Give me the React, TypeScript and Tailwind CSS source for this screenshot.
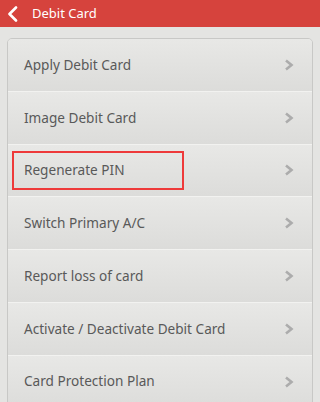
const ITEMS = [
  'Apply Debit Card',
  'Image Debit Card',
  'Regenerate PIN',
  'Switch Primary A/C',
  'Report loss of card',
  'Activate / Deactivate Debit Card',
  'Card Protection Plan',
]

function Chevron() {
  return (
    <svg width="10" height="12" viewBox="0 0 10 12" className="shrink-0">
      <path d="M2 1.5 L7.5 6 L2 10.5" fill="none" stroke="#acacac" strokeWidth="2.6" strokeLinejoin="miter" />
    </svg>
  )
}

export default function App() {
  return (
    <div className="w-[320px] h-[402px] overflow-hidden bg-[#e4e4e2] font-['Noto_Sans',sans-serif]">
      {/* Top bar */}
      <div className="h-[27px] bg-[#d6433d] flex items-center pl-[7px] gap-[14px] text-white">
        <svg width="11" height="16" viewBox="0 0 11 16" className="shrink-0">
          <path d="M9 1.5 L2.5 8 L9 14.5" fill="none" stroke="white" strokeWidth="2.6" strokeLinecap="round" strokeLinejoin="round" />
        </svg>
        <span className="text-[13px]">Debit Card</span>
      </div>

      {/* Menu card */}
      <div className="mx-[7px] mt-[11px] rounded-[5px] border border-[#c8c8c6] overflow-hidden">
        {ITEMS.map((label, i) => (
          <div
            key={label}
            className="relative h-[52.8px] flex items-center justify-between pl-[16px] pr-[18px] border-b border-[#f2f2f0] bg-gradient-to-b from-[#e8e8e6] to-[#dcdcda]"
          >
            <span className="text-[13.6px] text-[#595959]">{label}</span>
            <Chevron />
            {i === 2 && (
              <div className="absolute left-[4px] top-[6px] w-[172px] h-[39px] border-2 border-[#ee3a3a]" />
            )}
          </div>
        ))}
      </div>
    </div>
  )
}
